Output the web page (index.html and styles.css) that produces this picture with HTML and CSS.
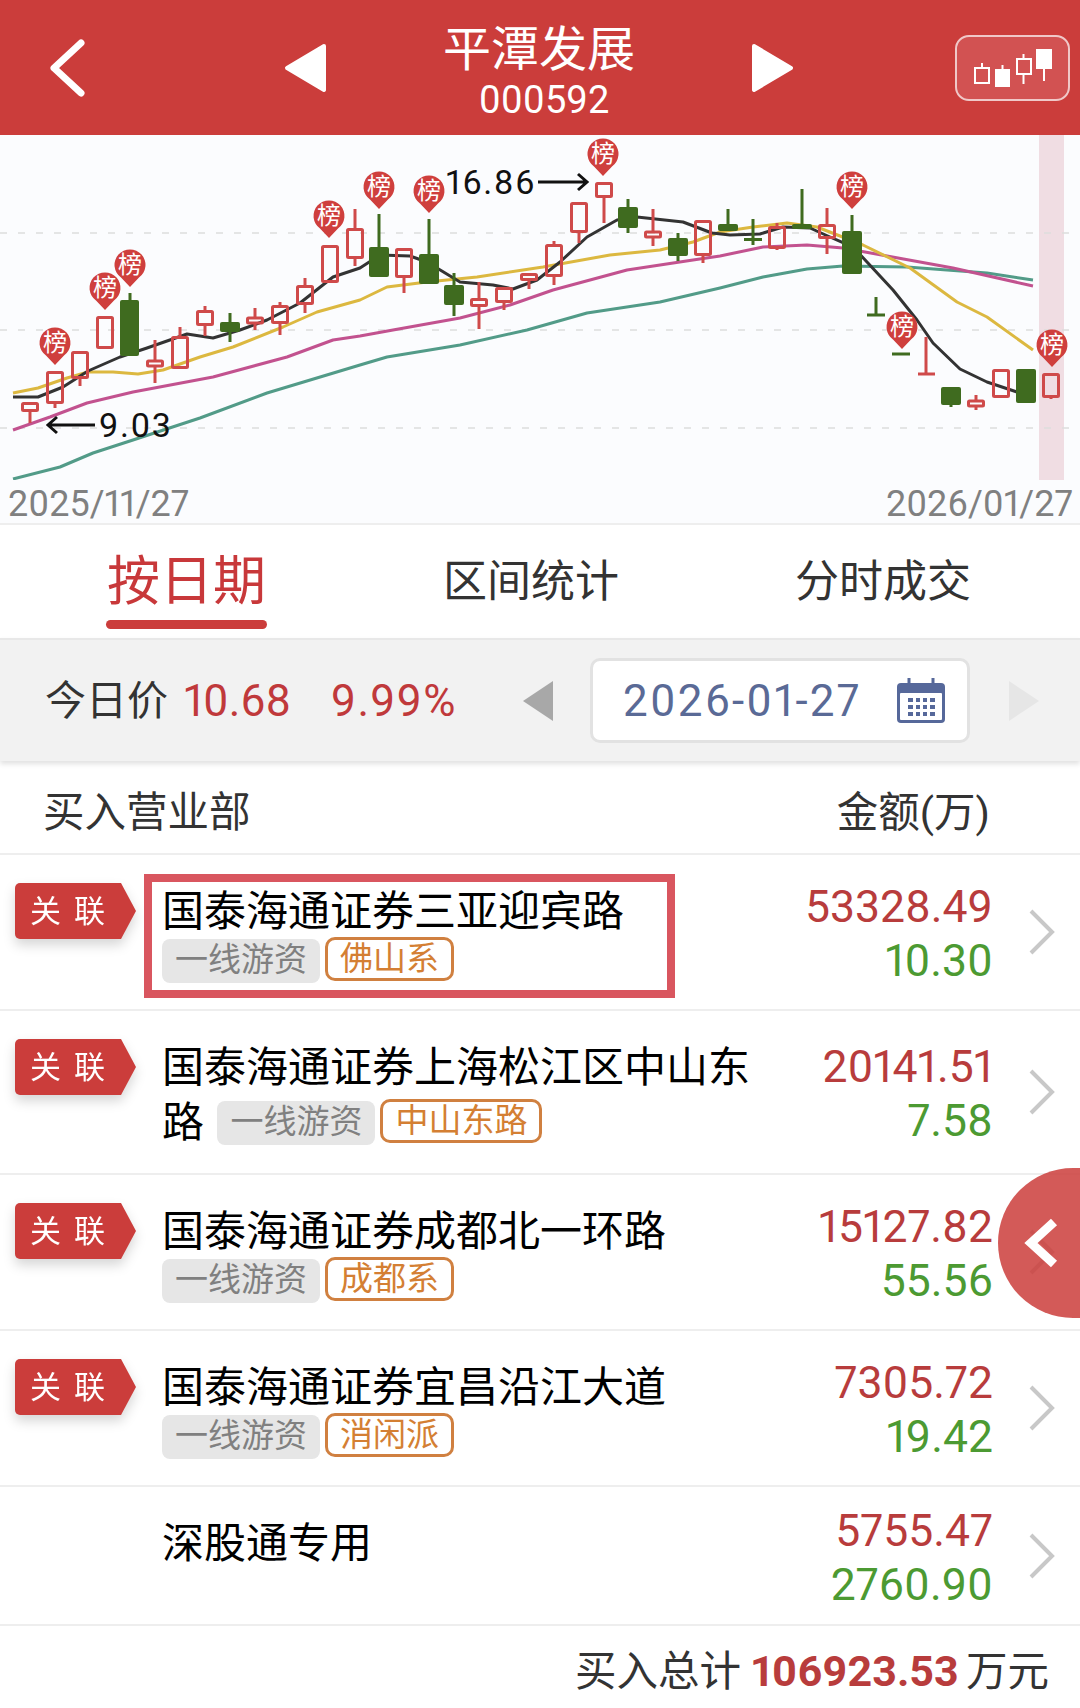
FILE: index.html
```html
<!DOCTYPE html>
<html lang="zh-CN">
<head>
    <meta charset="UTF-8">
    <meta name="viewport" content="width=device-width, initial-scale=1.0">
    <title>平潭发展 000592</title>
    <link rel="stylesheet" href="styles.css">
</head>
<body>
<div class="page">

    <!-- Top bar -->
    <header class="topbar">
        <svg class="back-icon" viewBox="0 0 38 58"><path d="M33 4 6 29l27 25"/></svg>
        <svg class="step-icon step-prev" viewBox="0 0 43 50"><path d="M40 3 3 25l37 22z"/></svg>
        <div class="stock-title">
            <div class="stock-name">平潭发展</div>
            <div class="stock-code">000592</div>
        </div>
        <svg class="step-icon" viewBox="0 0 43 50"><path d="M3 3l37 22L3 47z"/></svg>
        <div class="kline-btn">
            <svg viewBox="955 34 115 66">
                <path class="kline-wick" d="M982 62v4M1002.500 64v4M1023.500 53v4M1023.500 73v10M1044 68v12"/>
                <rect class="kline-open" x="975" y="67" width="14" height="15"/>
                <rect class="kline-full" x="995" y="68" width="15" height="18"/>
                <rect class="kline-open" x="1017" y="58" width="14" height="15"/>
                <rect class="kline-full" x="1036" y="48" width="16" height="20"/>
            </svg>
        </div>
    </header>

    <!-- K-line chart, coordinates are page pixels -->
    <section class="chart">
        <svg class="chart-svg" viewBox="0 135 1080 345">
            <rect class="today-band" x="1039" y="135" width="25" height="345"/>
            <path class="grid-line" d="M0 233H1080M0 330H1080M0 428H1080"/>

            <polyline class="ma ma-teal" points="13,479 60,467 93,453 133,440 200,418 267,393 360,365 387,357 460,345 527,330 587,313 660,302 720,288 763,277 807,269 843,266 907,267 987,273 1033,280"/>
            <polyline class="ma ma-pink" points="13,430 50,417 87,403 133,392 213,377 287,357 333,340 360,336 393,330 460,318 510,305 553,290 627,270 693,260 720,256 763,247 807,245 843,248 887,256 953,268 1033,286"/>
            <polyline class="ma ma-yellow" points="13,393 38,388 67,378 88,372 113,372 138,374 163,370 200,357 233,347 283,327 317,312 360,300 387,287 427,282 477,277 543,267 610,255 660,250 693,242 720,232 753,227 787,223 817,227 863,245 910,268 957,302 987,317 1033,350"/>
            <polyline class="ma ma-black" points="13,397 38,397 63,387 88,371 120,357 147,348 187,334 213,338 240,330 267,320 300,303 333,277 360,268 380,255 410,256 427,262 460,282 493,285 513,289 537,280 560,262 587,237 617,220 637,217 683,222 712,233 730,235 760,234 783,227 810,228 830,237 853,247 867,262 893,290 917,320 933,343 960,369 987,382 1017,392"/>

            <!-- rising days -->
            <path class="wick-up" d="M30 412v11M55 404v4M80 379v7M155 340v20M155 367v16M180 327v9M205 306v4M205 326v10M255 308v9M255 324v6M280 302v3M280 324v11M305 278v7M305 305v8M355 209v19M355 259v7M404 278v15M479 282v16M479 307v22M504 303v7M529 281v8M554 241v3M554 277v8M579 233v10M604 198v25M653 209v23M653 237v9M703 256v7M777 223v3M777 249v1M827 208v16M827 239v15M976 395v6M976 406v4M1051 398v1M926 337v37M918 374h17"/>
            <g class="body-up">
                <rect x="22.500" y="403.500" width="15" height="7"/>
                <rect x="47.500" y="372.500" width="15" height="30"/>
                <rect x="72.500" y="352.500" width="15" height="25"/>
                <rect x="97.500" y="317.500" width="15" height="30"/>
                <rect x="147.500" y="361" width="15" height="5"/>
                <rect x="172.500" y="337.500" width="15" height="30"/>
                <rect x="197.500" y="311.500" width="15" height="13"/>
                <rect x="247.500" y="318" width="15" height="5"/>
                <rect x="272.500" y="306.500" width="15" height="16"/>
                <rect x="297.500" y="286.500" width="15" height="17"/>
                <rect x="322.500" y="246.500" width="15" height="35"/>
                <rect x="347.500" y="229.500" width="15" height="28"/>
                <rect x="396.500" y="249.500" width="15" height="27"/>
                <rect x="471.500" y="299.500" width="15" height="6"/>
                <rect x="496.500" y="288.500" width="15" height="13"/>
                <rect x="521.500" y="274.500" width="15" height="5"/>
                <rect x="546.500" y="245.500" width="15" height="30"/>
                <rect x="571.500" y="203.500" width="15" height="28"/>
                <rect x="596.500" y="183.500" width="15" height="13"/>
                <rect x="645.500" y="232" width="15" height="5"/>
                <rect x="695.500" y="221.500" width="15" height="33"/>
                <rect x="769.500" y="227.500" width="15" height="20"/>
                <rect x="819.500" y="225.500" width="15" height="12"/>
                <rect x="968.500" y="401" width="15" height="5"/>
                <rect x="993.500" y="370.500" width="15" height="26"/>
                <rect x="1043.500" y="374.500" width="15" height="22"/>
            </g>

            <!-- falling days -->
            <path class="wick-down" d="M130 293v7M230 313v29M379 214v33M429 219v35M454 273v43M628 199v34M678 233v28M728 209v15M753 219v26M744 239.500h18M802 189v35M852 215v16M876 297v18M867 315h18M892 354h18M951 405v2"/>
            <g class="body-down">
                <rect x="120" y="300" width="19" height="56"/>
                <rect x="220" y="322" width="20" height="10"/>
                <rect x="369" y="247" width="20" height="30"/>
                <rect x="419" y="254" width="20" height="30"/>
                <rect x="444" y="285" width="20" height="20"/>
                <rect x="618" y="207" width="20" height="21"/>
                <rect x="668" y="238" width="20" height="18"/>
                <rect x="718" y="224" width="20" height="7"/>
                <rect x="792" y="224" width="20" height="5"/>
                <rect x="842" y="231" width="20" height="43"/>
                <rect x="941" y="387" width="20" height="18"/>
                <rect x="1016" y="369" width="20" height="34"/>
            </g>

            <!-- high and low of the period -->
            <text class="price-note" x="446" y="194">16.86</text>
            <path class="note-arrow" d="M538 182h49M578 174l9 8-9 8"/>
            <text class="price-note" x="99" y="437">9.03</text>
            <path class="note-arrow" d="M95 425H48M57 417l-9 8 9 8"/>

            <!-- 榜 markers -->
            <g class="pin" transform="translate(55 343)"><path d="M-9 12.500 0 22l9-9.500A15.500 15.500 0 1 0-9 12.500z"/><text y="8">榜</text></g>
            <g class="pin" transform="translate(105 288)"><path d="M-9 12.500 0 22l9-9.500A15.500 15.500 0 1 0-9 12.500z"/><text y="8">榜</text></g>
            <g class="pin" transform="translate(130 265)"><path d="M-9 12.500 0 22l9-9.500A15.500 15.500 0 1 0-9 12.500z"/><text y="8">榜</text></g>
            <g class="pin" transform="translate(329 216)"><path d="M-9 12.500 0 22l9-9.500A15.500 15.500 0 1 0-9 12.500z"/><text y="8">榜</text></g>
            <g class="pin" transform="translate(379 187)"><path d="M-9 12.500 0 22l9-9.500A15.500 15.500 0 1 0-9 12.500z"/><text y="8">榜</text></g>
            <g class="pin" transform="translate(429 191)"><path d="M-9 12.500 0 22l9-9.500A15.500 15.500 0 1 0-9 12.500z"/><text y="8">榜</text></g>
            <g class="pin" transform="translate(603 154)"><path d="M-9 12.500 0 22l9-9.500A15.500 15.500 0 1 0-9 12.500z"/><text y="8">榜</text></g>
            <g class="pin" transform="translate(852 187)"><path d="M-9 12.500 0 22l9-9.500A15.500 15.500 0 1 0-9 12.500z"/><text y="8">榜</text></g>
            <g class="pin" transform="translate(902 327)"><path d="M-9 12.500 0 22l9-9.500A15.500 15.500 0 1 0-9 12.500z"/><text y="8">榜</text></g>
            <g class="pin" transform="translate(1052 345)"><path d="M-9 12.500 0 22l9-9.500A15.500 15.500 0 1 0-9 12.500z"/><text y="8">榜</text></g>
        </svg>
        <div class="chart-dates">
            <span>2025/11/27</span>
            <span>2026/01/27</span>
        </div>
    </section>

    <!-- Tabs -->
    <nav class="tabs">
        <div class="tab tab-active">按日期</div>
        <div class="tab">区间统计</div>
        <div class="tab">分时成交</div>
    </nav>

    <!-- Today price and date picker -->
    <div class="today-bar">
        <span class="today-label">今日价</span>
        <span class="today-price">10.68</span>
        <span class="today-change">9.99%</span>
        <svg class="date-arrow date-prev" viewBox="0 0 32 42"><path d="M31 1 1 21l30 20z"/></svg>
        <div class="date-box">
            <span class="date-text">2026-01-27</span>
            <svg class="calendar-icon" viewBox="0 0 48 45">
                <path class="cal-body" d="M4 5h40a4 4 0 0 1 4 4v32a4 4 0 0 1-4 4H4a4 4 0 0 1-4-4V9a4 4 0 0 1 4-4z"/>
                <rect class="cal-page" x="3" y="15" width="42" height="27" rx="1"/>
                <path class="cal-ring" d="M12 0v11M36 0v11"/>
                <path class="cal-dots" d="M11 20h5v4h-5zM19 20h4v4h-4zM26 20h4v4h-4zM33 20h5v4h-5zM11 27h5v4h-5zM19 27h4v4h-4zM26 27h4v4h-4zM33 27h5v4h-5zM11 34h5v4h-5zM19 34h4v4h-4zM26 34h4v4h-4zM33 34h5v4h-5z"/>
            </svg>
        </div>
        <svg class="date-arrow date-next" viewBox="0 0 32 42"><path d="M1 1l30 20L1 41z"/></svg>
    </div>

    <!-- List -->
    <div class="list-head">
        <span>买入营业部</span>
        <span>金额(万)</span>
    </div>

    <div class="row">
        <div class="flag">关联</div>
        <div class="broker">国泰海通证券三亚迎宾路 <span class="tags"><span class="tag tag-gray">一线游资</span><span class="tag tag-orange">佛山系</span></span></div>
        <div class="amounts"><div class="amount-buy">53328.49</div><div class="amount-sell">10.30</div></div>
        <svg class="row-arrow" viewBox="0 0 26 46"><path d="M2 2l21 21L2 44"/></svg>
        <div class="mark-box"></div>
    </div>

    <div class="row row-tall">
        <div class="flag">关联</div>
        <div class="broker">国泰海通证券上海松江区中山东路 <span class="tags"><span class="tag tag-gray">一线游资</span><span class="tag tag-orange">中山东路</span></span></div>
        <div class="amounts"><div class="amount-buy">20141.51</div><div class="amount-sell">7.58</div></div>
        <svg class="row-arrow" viewBox="0 0 26 46"><path d="M2 2l21 21L2 44"/></svg>
    </div>

    <div class="row">
        <div class="flag">关联</div>
        <div class="broker">国泰海通证券成都北一环路 <span class="tags"><span class="tag tag-gray">一线游资</span><span class="tag tag-orange">成都系</span></span></div>
        <div class="amounts"><div class="amount-buy">15127.82</div><div class="amount-sell">55.56</div></div>
        <svg class="row-arrow" viewBox="0 0 26 46"><path d="M2 2l21 21L2 44"/></svg>
    </div>

    <div class="row">
        <div class="flag">关联</div>
        <div class="broker">国泰海通证券宜昌沿江大道 <span class="tags"><span class="tag tag-gray">一线游资</span><span class="tag tag-orange">消闲派</span></span></div>
        <div class="amounts"><div class="amount-buy">7305.72</div><div class="amount-sell">19.42</div></div>
        <svg class="row-arrow" viewBox="0 0 26 46"><path d="M2 2l21 21L2 44"/></svg>
    </div>

    <div class="row row-plain">
        <div class="flag flag-empty"></div>
        <div class="broker">深股通专用</div>
        <div class="amounts"><div class="amount-buy">5755.47</div><div class="amount-sell">2760.90</div></div>
        <svg class="row-arrow" viewBox="0 0 26 46"><path d="M2 2l21 21L2 44"/></svg>
    </div>

    <div class="total">买入总计 <b>106923.53</b> 万元</div>

    <!-- Floating side button -->
    <div class="side-btn">
        <svg viewBox="0 0 34 50"><path d="M30 4 7 25l23 21"/></svg>
    </div>
</div>
</body>
</html>
```

FILE: styles.css
```css
* {
    box-sizing: border-box;
    margin: 0;
    padding: 0;
}

body {
    font-family: Roboto, "Noto Sans CJK SC", sans-serif;
    font-variant-numeric: proportional-nums;
    background-color: #ffffff;
}

.page {
    position: relative;
    width: 1080px;
    height: 1708px;
    overflow: hidden;
}

/* Top bar */
.topbar {
    display: flex;
    align-items: center;
    height: 135px;
    padding-left: 48px;
    background-color: #cb3d3b;
    color: #ffffff;
}

.back-icon {
    width: 38px;
    height: 58px;
    fill: none;
    stroke: #ffffff;
    stroke-width: 7;
    stroke-linecap: round;
    stroke-linejoin: round;
}

.step-icon {
    width: 43px;
    height: 50px;
    fill: #ffffff;
    stroke: #ffffff;
    stroke-width: 4;
    stroke-linejoin: round;
}

.step-prev {
    margin-left: 198px;
}

.stock-title {
    width: 424px;
    padding-top: 8px;
    text-align: center;
}

.stock-name {
    font-size: 48px;
    line-height: 56px;
}

.stock-code {
    font-size: 38px;
    line-height: 44px;
    padding-left: 10px;
}

.kline-btn {
    width: 115px;
    height: 66px;
    margin-left: 161px;
    background-color: #d25252;
    border: 2px solid #f0c8c8;
    border-radius: 14px;
    overflow: hidden;
}

.kline-btn svg {
    display: block;
    width: 115px;
    height: 66px;
    margin: -2px;
}

.kline-wick {
    fill: none;
    stroke: #ffffff;
    stroke-width: 2;
}

.kline-open {
    fill: none;
    stroke: #ffffff;
    stroke-width: 2;
}

.kline-full {
    fill: #ffffff;
}

/* Chart */
.chart {
    height: 390px;
    background-color: #fbfcfe;
    border-bottom: 2px solid #eeeeee;
}

.chart-svg {
    display: block;
    width: 1080px;
    height: 345px;
}

.today-band {
    fill: #f0dde3;
}

.grid-line {
    fill: none;
    stroke: #dddddd;
    stroke-width: 1.500;
    stroke-dasharray: 7 11;
}

.ma {
    fill: none;
    stroke-width: 3;
    stroke-linejoin: round;
}

.ma-black {
    stroke: #333333;
}

.ma-yellow {
    stroke: #dcb840;
}

.ma-pink {
    stroke: #c2528f;
}

.ma-teal {
    stroke: #529b88;
}

.wick-up {
    fill: none;
    stroke: #cf4a4a;
    stroke-width: 3;
}

.body-up rect {
    fill: none;
    stroke: #cf4a4a;
    stroke-width: 3;
    rx: 1;
}

.wick-down {
    fill: none;
    stroke: #3f6b1f;
    stroke-width: 3;
}

.body-down rect {
    fill: #3f6b1f;
    rx: 2;
}

.price-note {
    font-size: 34px;
    letter-spacing: 1.500px;
    fill: #111111;
}

.note-arrow {
    fill: none;
    stroke: #111111;
    stroke-width: 3;
}

.pin path {
    fill: #cf3f3d;
}

.pin text {
    font-size: 24px;
    fill: #ffffff;
    text-anchor: middle;
}

.chart-dates {
    display: flex;
    justify-content: space-between;
    padding: 2px 7px 0 8px;
    font-size: 36px;
    line-height: 44px;
    color: #808080;
}

/* Tabs */
.tabs {
    display: flex;
    gap: 176px;
    height: 113px;
    padding: 27px 0 0 106px;
}

.tab {
    display: flex;
    flex-direction: column;
    align-items: center;
    font-size: 44px;
    line-height: 60px;
    color: #333333;
    white-space: nowrap;
}

.tab-active {
    width: 161px;
    font-size: 53px;
    color: #c8383a;
}

.tab-active::after {
    content: "";
    width: 100%;
    height: 9px;
    margin-top: 8px;
    background-color: #cb3d3b;
    border-radius: 5px;
}

/* Today bar */
.today-bar {
    display: flex;
    align-items: center;
    height: 123px;
    padding-left: 45px;
    background-color: #f2f2f2;
    border-top: 2px solid #e8e8e8;
    box-shadow: 0 3px 5px rgba(0, 0, 0, 0.12);
    position: relative;
    font-size: 44px;
}

.today-label {
    width: 139px;
    margin-bottom: 8px;
    font-size: 41px;
    color: #333333;
}

.today-price {
    width: 147px;
    color: #c0393b;
}

.today-change {
    width: 191px;
    letter-spacing: 1.300px;
    color: #c0393b;
}

.date-arrow {
    width: 32px;
    height: 42px;
    stroke-linejoin: round;
}

.date-prev {
    fill: #a8a8a8;
}

.date-next {
    margin-left: 38px;
    fill: #e6e6e6;
}

.date-box {
    display: flex;
    align-items: center;
    width: 380px;
    height: 85px;
    margin-left: 36px;
    padding-left: 30px;
    background-color: #ffffff;
    border: 3px solid #e2e2e2;
    border-radius: 10px;
}

.date-text {
    width: 274px;
    letter-spacing: 2.200px;
    color: #5a6a96;
}

.calendar-icon {
    width: 48px;
    height: 45px;
}

.cal-body {
    fill: #56689a;
}

.cal-page {
    fill: #ffffff;
}

.cal-ring {
    fill: none;
    stroke: #56689a;
    stroke-width: 3;
}

.cal-dots {
    fill: #56689a;
}

/* List */
.list-head {
    display: flex;
    justify-content: space-between;
    align-items: center;
    height: 94px;
    padding: 3px 90px 0 43px;
    border-bottom: 2px solid #eeeeee;
    font-size: 41.500px;
    color: #333333;
}

.row {
    position: relative;
    display: flex;
    height: 156px;
    padding: 28px 25px 0 15px;
    border-bottom: 2px solid #eeeeee;
}

.row-tall {
    height: 164px;
}

.row-plain {
    height: 139px;
}

.flag {
    flex: none;
    width: 121px;
    height: 56px;
    filter: drop-shadow(0 6px 6px rgba(0, 0, 0, 0.16));
}

.flag-empty {
    filter: none;
}

.flag:not(.flag-empty) {
    padding-left: 15px;
    color: #ffffff;
    font-size: 31px;
    line-height: 58px;
    letter-spacing: 13px;
    white-space: nowrap;
    position: relative;
    z-index: 0;
}

.flag:not(.flag-empty)::before {
    content: "";
    position: absolute;
    z-index: -1;
    top: 0;
    left: 0;
    width: 121px;
    height: 56px;
    background-color: #cb3d3b;
    border-radius: 5px 0 0 5px;
    clip-path: polygon(0 0, 106px 0, 100% 50%, 106px 100%, 0 100%);
}

.broker {
    flex: none;
    width: 610px;
    margin: 1px 0 0 26px;
    font-size: 42px;
    line-height: 55px;
    color: #000000;
}

.tags {
    display: inline-flex;
    align-items: flex-start;
    gap: 5px;
    vertical-align: top;
    margin-top: -2px;
}

.row-tall .tags {
    margin: 4px 0 0 3px;
}

.tag {
    display: block;
    height: 44px;
    padding: 0 13px;
    font-size: 33px;
    line-height: 42px;
    border-radius: 8px;
}

.tag-gray {
    margin-top: 2px;
    background-color: #e6e6e6;
    color: #808080;
}

.tag-orange {
    padding: 0 12px;
    border: 3px solid #d08040;
    border-radius: 10px;
    line-height: 38px;
    color: #d47f33;
}

.amounts {
    align-self: center;
    margin: -24px 0 0 auto;
    font-size: 44.500px;
    line-height: 54px;
    text-align: right;
}

.amount-buy {
    color: #b83c3c;
}

.amount-sell {
    color: #4c9a32;
}

.row-arrow {
    flex: none;
    align-self: center;
    width: 26px;
    height: 46px;
    margin: -28px 0 0 36px;
    fill: none;
    stroke: #c8c8c8;
    stroke-width: 4;
}

/* Red hand-drawn mark around the first broker */
.mark-box {
    position: absolute;
    top: 19px;
    left: 144px;
    width: 531px;
    height: 124px;
    border: 8px solid #d9565f;
}

.total {
    height: 82px;
    padding-right: 31px;
    font-size: 41.500px;
    line-height: 90px;
    text-align: right;
    color: #333333;
}

.total b {
    margin-right: -3px;
    font-size: 43px;
    color: #b83c3c;
}

.side-btn {
    position: absolute;
    top: 1168px;
    right: 0;
    display: flex;
    align-items: center;
    width: 82px;
    height: 150px;
    padding-left: 26px;
    background-color: rgba(203, 61, 59, 0.85);
    border-radius: 75px 0 0 75px;
}

.side-btn svg {
    width: 34px;
    height: 50px;
    fill: none;
    stroke: #ffffff;
    stroke-width: 9;
}
```
